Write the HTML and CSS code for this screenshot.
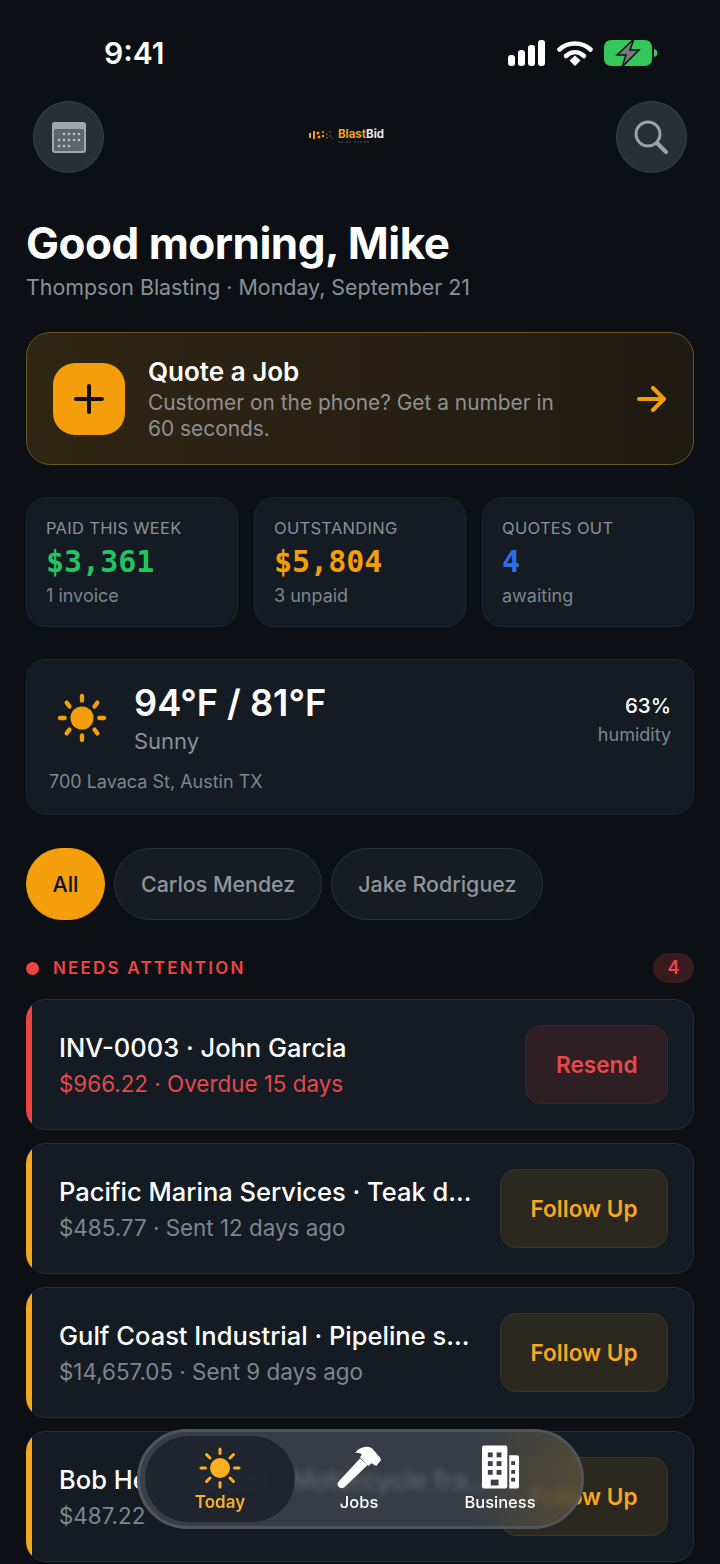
FILE: index.html
```html
<!DOCTYPE html>
<html lang="en">
<head>
    <meta charset="UTF-8">
    <meta name="viewport" content="width=device-width, initial-scale=1.0">
    <title>BlastBid - Today</title>
    <link rel="stylesheet" href="styles.css">
</head>
<body>
<div class="phone">
    <div class="status-bar">
        <span class="time">9:41</span>
        <div class="status-icons">
            <svg width="38" height="26" viewBox="0 0 38 26"><rect x="0" y="15" width="7" height="11" rx="3" fill="#fff"/><rect x="10" y="10" width="7" height="16" rx="3" fill="#fff"/><rect x="20" y="5" width="7" height="21" rx="3" fill="#fff"/><rect x="30" y="0" width="7" height="26" rx="3" fill="#fff"/></svg>
            <svg width="36" height="26" viewBox="0 0 36 26"><path d="M2.5 9.5C11 1.500 25 1.500 33.500 9.500" fill="none" stroke="#fff" stroke-width="4.500" stroke-linecap="round"/><path d="M9 16C14.500 11 21.500 11 27 16" fill="none" stroke="#fff" stroke-width="4.500" stroke-linecap="round"/><path d="M12.500 20.500L18 15.500L23.500 20.500L18 26Z" fill="#fff"/></svg>
            <svg width="54" height="26" viewBox="0 0 54 26"><rect x="0" y="0" width="48" height="26" rx="7" fill="#34c759"/><path d="M50 9c2.500.5 3.500 2 3.500 4s-1 3.500-3.500 4z" fill="#34c759"/><path d="M30 -1L13 15H22L18 27L35 10H26Z" fill="#77797c" stroke="#0d1117" stroke-width="1.500"/></svg>
        </div>
    </div>

    <div class="top-bar">
        <div class="round-btn">
            <svg width="34" height="31" viewBox="0 0 34 31"><rect x="0" y="0" width="34" height="31" rx="3" fill="#a2a7ae"/><rect x="2" y="7" width="30" height="22" rx="1.500" fill="#5f656d"/><g fill="#c0c4c9"><circle cx="12" cy="12" r="1.300"/><circle cx="17" cy="12" r="1.300"/><circle cx="22" cy="12" r="1.300"/><circle cx="27" cy="12" r="1.300"/><circle cx="7" cy="18" r="1.300"/><circle cx="12" cy="18" r="1.300"/><circle cx="17" cy="18" r="1.300"/><circle cx="22" cy="18" r="1.300"/><circle cx="27" cy="18" r="1.300"/><circle cx="7" cy="24" r="1.300"/><circle cx="12" cy="24" r="1.300"/><circle cx="17" cy="24" r="1.300"/></g></svg>
        </div>
        <div class="logo">
            <svg width="24" height="10" viewBox="0 0 24 10"><g fill="#f59e0b"><rect x="0" y="3" width="2" height="5"/><rect x="4" y="1" width="2" height="8"/><circle cx="9" cy="3" r="1.500"/><circle cx="10" cy="7" r="1.500"/><circle cx="14" cy="2" r="1.100"/><circle cx="14" cy="6" r="1.200"/></g><g fill="#b98a35"><circle cx="18" cy="4" r=".8"/><circle cx="18" cy="8" r=".8"/><circle cx="21" cy="2" r=".7"/><circle cx="21" cy="6" r=".7"/><circle cx="23" cy="8" r=".6"/></g></svg>
            <div class="logo-text">
                <span class="logo-name"><span class="logo-blast">Blast</span>Bid</span>
                <svg class="logo-tag" width="32" height="2" viewBox="0 0 32 2"><path d="M0 1H6M8 1H14M16 1H24M26 1H32" stroke="#555" stroke-width="1" stroke-dasharray="2 1"/></svg>
            </div>
        </div>
        <div class="round-btn">
            <svg width="36" height="36" viewBox="0 0 36 36" fill="none" stroke="#9ca1a8" stroke-linecap="round"><circle cx="15" cy="15" r="12" stroke-width="3"/><path d="M24 24L33 33" stroke-width="4"/></svg>
        </div>
    </div>

    <div class="content">
        <h1 class="greeting">Good morning, Mike</h1>
        <p class="greeting-sub">Thompson Blasting · Monday, September 21</p>

        <div class="quote-card">
            <div class="quote-icon">
                <svg width="32" height="32" viewBox="0 0 32 32" stroke="#0d1117" stroke-width="4" stroke-linecap="round"><path d="M16 3V29M3 16H29"/></svg>
            </div>
            <div class="quote-text">
                <div class="quote-title">Quote a Job</div>
                <div class="quote-sub">Customer on the phone? Get a number in 60 seconds.</div>
            </div>
            <svg class="quote-arrow" width="30" height="26" viewBox="0 0 30 26" fill="none" stroke="#f59e0b" stroke-width="4" stroke-linecap="round" stroke-linejoin="round"><path d="M2 13H27M16 2L27 13L16 24"/></svg>
        </div>

        <div class="stats">
            <div class="stat">
                <div class="stat-label">PAID THIS WEEK</div>
                <div class="stat-value green">$3,361</div>
                <div class="stat-note">1 invoice</div>
            </div>
            <div class="stat">
                <div class="stat-label">OUTSTANDING</div>
                <div class="stat-value amber">$5,804</div>
                <div class="stat-note">3 unpaid</div>
            </div>
            <div class="stat">
                <div class="stat-label">QUOTES OUT</div>
                <div class="stat-value blue">4</div>
                <div class="stat-note">awaiting</div>
            </div>
        </div>

        <div class="weather">
            <div class="weather-top">
                <svg class="weather-icon" width="50" height="50" viewBox="0 0 52 52"><circle cx="26" cy="26" r="12" fill="#f59e0b"/><g stroke="#f59e0b" stroke-width="4.500" stroke-linecap="round"><path d="M26 3V8M26 44V49M3 26H8M44 26H49M10 10L13 14M42 10L39 14M10 42L13 38M42 42L39 38"/></g></svg>
                <div class="weather-main">
                    <div class="weather-temp">94°F / 81°F</div>
                    <div class="weather-cond">Sunny</div>
                </div>
                <div class="weather-side">
                    <div class="weather-pct">63%</div>
                    <div class="weather-hum">humidity</div>
                </div>
            </div>
            <div class="weather-addr">700 Lavaca St, Austin TX</div>
        </div>

        <div class="chips">
            <span class="chip chip-active">All</span>
            <span class="chip">Carlos Mendez</span>
            <span class="chip">Jake Rodriguez</span>
        </div>

        <div class="section-head">
            <span class="section-dot"></span>
            <span class="section-title">NEEDS ATTENTION</span>
            <span class="section-count">4</span>
        </div>

        <div class="job-list">
            <div class="job job-red">
                <div class="job-info">
                    <div class="job-name">INV-0003 · John Garcia</div>
                    <div class="job-meta red">$966.22 · Overdue 15 days</div>
                </div>
                <span class="job-btn btn-red">Resend</span>
            </div>
            <div class="job job-amber">
                <div class="job-info">
                    <div class="job-name">Pacific Marina Services · Teak d...</div>
                    <div class="job-meta">$485.77 · Sent 12 days ago</div>
                </div>
                <span class="job-btn btn-amber">Follow Up</span>
            </div>
            <div class="job job-amber">
                <div class="job-info">
                    <div class="job-name">Gulf Coast Industrial · Pipeline s...</div>
                    <div class="job-meta">$14,657.05 · Sent 9 days ago</div>
                </div>
                <span class="job-btn btn-amber">Follow Up</span>
            </div>
            <div class="job job-amber">
                <div class="job-info">
                    <div class="job-name">Bob Hendrickson · Motorcycle fra...</div>
                    <div class="job-meta">$487.22</div>
                </div>
                <span class="job-btn btn-amber">Follow Up</span>
            </div>
        </div>
    </div>

    <div class="tab-bar">
        <div class="tab tab-active">
            <svg width="42" height="42" viewBox="0 0 42 42"><circle cx="21" cy="21" r="10" fill="#fbb024"/><g stroke="#fbb024" stroke-width="3" stroke-linecap="round"><path d="M21 2V6.500M21 35.500V40M2 21H6.500M35.500 21H40M7.500 7.500L11 11M34.500 7.500L31 11M7.500 34.500L11 31M34.500 34.500L31 31"/></g></svg>
            <span>Today</span>
        </div>
        <div class="tab">
            <svg width="48" height="44" viewBox="0 0 48 46"><path d="M3 38L25 14L33 21L9 44C7 46 4 45 3 44C1 42 1 40 3 38Z" fill="#fff"/><path d="M20 8C25 2 33 0 38 4L46 13L47 16L42 22L37 19L34 22L25 13L27 10C25 8 22 8 20 8Z" fill="#fff"/></svg>
            <span>Jobs</span>
        </div>
        <div class="tab">
            <svg width="37" height="44" viewBox="0 0 38 44"><path d="M2 0H24A2 2 0 0 1 26 2V42A2 2 0 0 1 24 44H2A2 2 0 0 1 0 42V2A2 2 0 0 1 2 0Z" fill="#fff"/><path d="M28 10H36A2 2 0 0 1 38 12V42A2 2 0 0 1 36 44H28Z" fill="#fff"/><g fill="#3a3f48"><rect x="6" y="7" width="5" height="5"/><rect x="15" y="7" width="5" height="5"/><rect x="6" y="16" width="5" height="5"/><rect x="15" y="16" width="5" height="5"/><rect x="6" y="25" width="5" height="5"/><rect x="15" y="25" width="5" height="5"/><rect x="9" y="35" width="8" height="6"/><rect x="30" y="16" width="4" height="4"/><rect x="30" y="25" width="4" height="4"/><rect x="30" y="33" width="4" height="4"/></g></svg>
            <span>Business</span>
        </div>
    </div>
</div>
</body>
</html>
```

FILE: styles.css
```css
* {
    box-sizing: border-box;
}
html, body {
    margin: 0;
    padding: 0;
    background: #0b0f14;
}
body {
    font-family: 'Inter', 'Liberation Sans', sans-serif;
    color: #fff;
}
.phone {
    position: relative;
    width: 720px;
    height: 1564px;
    overflow: hidden;
    background: #0c1015;
}
.status-bar {
    height: 101px;
    padding: 4px 62px 0 104px;
    display: flex;
    align-items: center;
    justify-content: space-between;
}
.time {
    font-size: 30px;
    font-weight: 600;
}
.status-icons {
    display: flex;
    align-items: center;
    gap: 11px;
}
.top-bar {
    height: 72px;
    padding: 0 33px;
    display: flex;
    align-items: center;
    justify-content: space-between;
}
.round-btn {
    width: 71px;
    height: 72px;
    border-radius: 50%;
    background: #2a2f36;
    border: 1px solid #3b4047;
    display: flex;
    align-items: center;
    justify-content: center;
}
.logo {
    display: flex;
    align-items: center;
    gap: 5px;
    margin: -4px 27px 0 0;
}
.logo-text {
    display: flex;
    flex-direction: column;
    gap: 1px;
}
.logo-name {
    font-size: 11.5px;
    line-height: 12px;
    font-weight: 700;
    color: #e8e8e8;
}
.logo-blast {
    color: #f0a020;
}
.logo-tag {
    display: block;
}
.content {
    padding: 0 26px;
}
.greeting {
    margin: 44px 0 0;
    font-size: 44px;
    line-height: 52px;
    font-weight: 700;
    letter-spacing: -0.5px;
}
.greeting-sub {
    margin: 4px 0 0;
    font-size: 21.4px;
    line-height: 28px;
    color: #8a9099;
}
.quote-card {
    margin-top: 31px;
    height: 133px;
    padding: 0 26px;
    display: flex;
    align-items: center;
    border-radius: 24px;
    border: 1.5px solid #6d5222;
    background: linear-gradient(90deg, #2f2512 0%, #282113 50%, #1f1a12 100%);
}
.quote-icon {
    width: 72px;
    height: 72px;
    flex-shrink: 0;
    border-radius: 22px;
    background: #f59e0b;
    display: flex;
    align-items: center;
    justify-content: center;
}
.quote-text {
    width: 430px;
    margin-left: 23px;
}
.quote-title {
    font-size: 26px;
    line-height: 32px;
    font-weight: 600;
}
.quote-sub {
    margin-top: 2px;
    font-size: 20.9px;
    line-height: 26px;
    color: #8f9092;
}
.quote-arrow {
    margin-left: auto;
}
.stats {
    margin-top: 32px;
    display: grid;
    grid-template-columns: repeat(3, 1fr);
    gap: 16px;
}
.stat {
    height: 130px;
    padding: 20px 19px;
    border-radius: 20px;
    background: #151b23;
    border: 1px solid #1f262f;
}
.stat-label {
    font-size: 16.5px;
    line-height: 20px;
    color: #8a9099;
    letter-spacing: 0.3px;
}
.stat-value {
    margin-top: 5px;
    font-family: 'DejaVu Sans Mono', 'Liberation Mono', monospace;
    font-size: 30px;
    line-height: 38px;
    font-weight: 700;
}
.stat-note {
    margin-top: 3px;
    font-size: 18px;
    line-height: 24px;
    color: #7e858e;
}
.green {
    color: #22c55e;
}
.amber {
    color: #f59e0b;
}
.blue {
    color: #2f6fe4;
}
.red {
    color: #e5484d;
}
.weather {
    margin-top: 32px;
    height: 156px;
    padding: 22px;
    border-radius: 20px;
    background: #151b23;
    border: 1px solid #1f262f;
}
.weather-top {
    display: flex;
    align-items: flex-start;
}
.weather-icon {
    margin: 11px 0 0 8px;
}
.weather-main {
    margin-left: 27px;
    margin-top: -1px;
}
.weather-temp {
    font-size: 36.2px;
    line-height: 44px;
    font-weight: 600;
}
.weather-cond {
    margin-top: 2px;
    font-size: 22px;
    line-height: 28px;
    color: #8a9099;
}
.weather-side {
    margin-left: auto;
    padding-top: 10px;
    text-align: right;
}
.weather-pct {
    font-size: 20.5px;
    line-height: 28px;
    font-weight: 500;
}
.weather-hum {
    margin-top: 3px;
    font-size: 18px;
    line-height: 24px;
    color: #7e858e;
}
.weather-addr {
    margin-top: 15px;
    font-size: 18px;
    line-height: 24px;
    color: #7e858e;
}
.chips {
    margin-top: 33px;
    display: flex;
    gap: 9px;
}
.chip {
    height: 72px;
    padding: 0 26px;
    display: flex;
    align-items: center;
    border-radius: 36px;
    background: #171c23;
    border: 1px solid #2a3038;
    font-size: 21.4px;
    font-weight: 500;
    color: #8f959d;
}
.chip-active {
    padding: 0 25.5px;
    background: #f59e0b;
    border-color: #f59e0b;
    color: #0d1117;
}
.section-head {
    margin-top: 33px;
    height: 30px;
    display: flex;
    align-items: center;
}
.section-dot {
    width: 13px;
    height: 13px;
    border-radius: 50%;
    background: #ef4444;
}
.section-title {
    margin-left: 14px;
    font-size: 17px;
    font-weight: 600;
    letter-spacing: 2.2px;
    color: #ef4444;
}
.section-count {
    margin-left: auto;
    width: 41px;
    height: 30px;
    border-radius: 15px;
    background: #371b1e;
    color: #ef4444;
    font-size: 18px;
    font-weight: 600;
    line-height: 30px;
    text-align: center;
}
.job-list {
    margin-top: 16px;
    display: flex;
    flex-direction: column;
    gap: 13px;
}
.job {
    height: 131px;
    flex-shrink: 0;
    padding: 0 25px 0 33px;
    display: flex;
    align-items: center;
    justify-content: space-between;
    border-radius: 20px;
    border: 1px solid #262c35;
    border-left-width: 0;
    background: #151b23;
}
.job-red {
    background: linear-gradient(90deg, #ef4444 6px, #151b23 6px);
}
.job-amber {
    background: linear-gradient(90deg, #f5a623 6px, #151b23 6px);
}
.job-info {
    min-width: 0;
    margin-top: -1px;
}
.job-name {
    font-size: 25.5px;
    line-height: 34px;
    font-weight: 500;
    white-space: nowrap;
}
.job-meta {
    margin-top: 5px;
    font-size: 22.4px;
    line-height: 28px;
    color: #7e858e;
}
.job-meta.red {
    color: #e5484d;
}
.job-btn {
    height: 79px;
    padding: 0 29.5px;
    flex-shrink: 0;
    display: flex;
    align-items: center;
    border-radius: 16px;
    font-size: 22.6px;
    font-weight: 600;
}
.btn-red {
    background: #2e1f25;
    border: 1px solid #3d252b;
    color: #e5484d;
}
.btn-amber {
    background: #2b281f;
    border: 1px solid #3b3524;
    color: #f5a623;
}
.tab-bar {
    position: absolute;
    left: 137px;
    top: 1429px;
    width: 447px;
    height: 100px;
    padding: 4px 5px;
    display: grid;
    grid-template-columns: 150px 128px 154px;
    border-radius: 50px;
    border: 3px solid #50555d;
    background: linear-gradient(90deg, rgba(58, 63, 72, 0.98) 3%, rgba(62, 67, 77, 0.84) 10%, rgba(62, 67, 77, 0.84) 75%, rgba(88, 80, 56, 0.86) 100%);
    backdrop-filter: blur(3px);
}
.tab {
    display: flex;
    flex-direction: column;
    align-items: center;
    justify-content: flex-end;
    gap: 2px;
    padding-bottom: 9px;
    font-size: 16.5px;
    line-height: 22px;
    font-weight: 500;
}
.tab-active {
    border-radius: 44px;
    background: rgba(30, 35, 44, 0.92);
    color: #fbb024;
    font-weight: 600;
    font-size: 17px;
}
```
